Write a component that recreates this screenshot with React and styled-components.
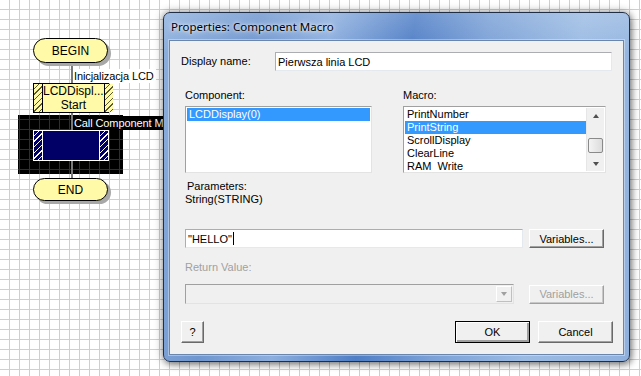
import React from 'react';
import styled, { createGlobalStyle, css } from 'styled-components';

const GlobalStyle = createGlobalStyle`
  html, body {
    margin: 0;
    padding: 0;
    overflow: hidden;
  }
  body {
    font-family: "Liberation Sans", Arial, sans-serif;
    font-size: 11px;
    color: #000;
  }
`;

const Canvas = styled.div`
  position: relative;
  width: 641px;
  height: 376px;
  overflow: hidden;
  background-color: #fff;
  background-image:
    linear-gradient(to right, #b9d3f7 1px, transparent 1px),
    linear-gradient(to bottom, #b9d3f7 1px, transparent 1px);
  background-size: 10px 10px;
  background-position: 9px 9px;
`;

/* ---------- flowchart ---------- */

const Connector = styled.div`
  position: absolute;
  left: 71px;
  top: 63px;
  width: 2px;
  height: 116px;
  background: #7a7a7a;
  z-index: 1;
`;

const Terminal = styled.div`
  position: absolute;
  left: 33px;
  top: ${p => p.$top}px;
  width: 75px;
  height: ${p => p.$h}px;
  box-sizing: border-box;
  border: 1px solid #000;
  border-radius: 13px;
  background: #fffaa8;
  box-shadow: 3px 3px 0 #a8a8a8;
  display: flex;
  align-items: center;
  justify-content: center;
  font-size: 12px;
  z-index: 2;
`;

const Selection = styled.div`
  position: absolute;
  left: 18px;
  top: 115px;
  width: 105px;
  height: 59px;
  background-color: #000;
  background-image:
    linear-gradient(to right, #3f2c0c 1px, transparent 1px),
    linear-gradient(to bottom, #3f2c0c 1px, transparent 1px);
  background-size: 10px 10px;
  background-position: 1px 4px;
`;

const NodeLabel = styled.div`
  position: absolute;
  left: 73px;
  top: ${p => p.$top}px;
  padding: 0 2px 0 1px;
  height: 14px;
  line-height: 14px;
  font-size: 11px;
  letter-spacing: -0.1px;
  white-space: nowrap;
  z-index: 3;
  ${p => p.$selected
    ? css`background: #000; color: #fff;`
    : css`background: #fff; color: #000;`}
`;

const Macro = styled.div`
  position: absolute;
  left: 33px;
  top: ${p => p.$top}px;
  width: 76px;
  height: ${p => p.$h}px;
  box-sizing: border-box;
  border: 1px solid ${p => (p.$selected ? '#fff' : '#000')};
  background: ${p => (p.$selected ? '#000066' : '#fffaa8')};
  display: flex;
  z-index: 2;
`;

const Hatch = styled.div`
  width: 8px;
  flex: none;
  ${p => p.$side === 'left'
    ? css`border-right: 1px solid ${p.$selected ? '#fff' : '#000'};`
    : css`border-left: 1px solid ${p.$selected ? '#fff' : '#000'};`}
  background: repeating-linear-gradient(
    135deg,
    ${p => (p.$selected ? '#000066' : '#fffaa8')} 0 3px,
    ${p => (p.$selected ? '#fff' : '#5a5a30')} 3px 4px
  );
`;

const MacroText = styled.div`
  flex: 1;
  display: flex;
  flex-direction: column;
  align-items: center;
  justify-content: center;
  font-size: 12px;
  line-height: 14px;
  color: ${p => (p.$selected ? '#fff' : '#000')};
`;

/* ---------- dialog window ---------- */

const Window = styled.div`
  position: absolute;
  left: 163px;
  top: 12px;
  width: 467px;
  height: 350px;
  box-sizing: border-box;
  border: 1px solid #1f2f48;
  border-radius: 7px;
  padding: 0 5px 6px 5px;
  display: flex;
  flex-direction: column;
  z-index: 10;
  background:
    linear-gradient(to bottom, rgba(255,255,255,0.18), rgba(255,255,255,0) 40px),
    linear-gradient(100deg, #8eb0dd 0%, #6f96cf 18%, #8caede 32%, #4f7ec6 48%, #7aa0d6 62%, #9bbbe3 80%, #8fb0dd 100%);
  box-shadow: 0 0 9px rgba(0, 0, 0, 0.45), 2px 3px 6px rgba(0, 0, 0, 0.3);
`;

const TitleBar = styled.div`
  height: 27px;
  display: flex;
  align-items: center;
  padding-left: 2px;
  font-family: "Noto Sans", "Open Sans", sans-serif;
  font-size: 11.5px;
  color: #000;
  text-shadow: 0 0 6px rgba(255, 255, 255, 0.9), 0 0 3px rgba(255, 255, 255, 0.9);
`;

const Client = styled.div`
  flex: 1;
  box-sizing: border-box;
  background: #f0f0f0;
  border: 1px solid #6a86ad;
  box-shadow: 0 0 0 1px rgba(255, 255, 255, 0.35);
  display: flex;
  flex-direction: column;
  padding: 11px 10px 11px 11px;
  font-size: 11px;
`;

const Row = styled.div`
  display: flex;
  align-items: center;
  gap: ${p => p.$gap || 0}px;
  margin-top: ${p => p.$mt || 0}px;
  padding-left: ${p => p.$pl || 0}px;
`;

const FieldLabel = styled.div`
  width: ${p => p.$w || 'auto'};
  flex: none;
  color: ${p => (p.$disabled ? '#a0a0a0' : '#000')};
  line-height: 13px;
  padding-left: ${p => p.$pl || 0}px;
`;

const TextBox = styled.div`
  box-sizing: border-box;
  width: ${p => p.$w}px;
  height: 19px;
  border: 1px solid;
  border-color: #abadb3 #e3e9ef #e3e9ef #abadb3;
  background: #fff;
  display: flex;
  align-items: center;
  padding-left: 2px;
  white-space: nowrap;
`;

const Caret = styled.span`
  display: inline-block;
  width: 1px;
  height: 13px;
  background: #000;
  margin-left: 1px;
`;

const ListsGrid = styled.div`
  display: grid;
  grid-template-columns: 187px 203px;
  column-gap: 31px;
  row-gap: 4px;
  margin-top: 18px;
  padding-left: 4px;
`;

const ListBox = styled.div`
  box-sizing: border-box;
  height: 67px;
  border: 1px solid;
  border-color: #a0a0a0 #e3e3e3 #e3e3e3 #a0a0a0;
  background: #fff;
  padding: 1px;
  display: flex;
  overflow: hidden;
`;

const ListItems = styled.div`
  flex: 1;
  display: flex;
  flex-direction: column;
  overflow: hidden;
`;

const ListItem = styled.div`
  height: 13px;
  flex: none;
  line-height: 13px;
  padding-left: 2px;
  white-space: nowrap;
  ${p => p.$selected && css`
    background: #3399ff;
    color: #fff;
  `}
`;

const ScrollBar = styled.div`
  width: 17px;
  flex: none;
  background: #f0f0f0;
  border-left: 1px solid #e6e6e6;
  display: flex;
  flex-direction: column;
  align-items: center;
`;

const ScrollArrow = styled.div`
  width: 15px;
  height: 15px;
  display: flex;
  align-items: center;
  justify-content: center;
  &::before {
    content: '';
    border-left: 3.5px solid transparent;
    border-right: 3.5px solid transparent;
    ${p => p.$down
      ? css`border-top: 4px solid #505050;`
      : css`border-bottom: 4px solid #505050;`}
  }
`;

const Thumb = styled.div`
  box-sizing: border-box;
  width: 15px;
  height: 15px;
  margin-top: 15px;
  margin-bottom: auto;
  border: 1px solid #8a8a8a;
  border-radius: 2px;
  background: linear-gradient(to right, #f4f4f4, #dcdcdc);
`;

const Params = styled.div`
  margin-top: 7px;
  padding-left: 4px;
  line-height: 12px;
`;

const Button = styled.div`
  box-sizing: border-box;
  width: ${p => p.$w || 75}px;
  height: ${p => p.$h || 19}px;
  flex: none;
  background: #f0f0f0;
  border: 1px solid;
  border-color: #fff #696969 #696969 #fff;
  box-shadow: inset -1px -1px 0 #a0a0a0;
  display: flex;
  align-items: center;
  justify-content: center;
  color: ${p => (p.$disabled ? '#a0a0a0' : '#000')};
  ${p => p.$disabled && css`
    border-color: #fff #a0a0a0 #a0a0a0 #fff;
    box-shadow: inset -1px -1px 0 #c8c8c8;
  `}
  ${p => p.$default && css`
    outline: 1px solid #000;
    outline-offset: -1px;
    box-shadow: inset 1px 1px 0 #fff, inset -2px -2px 0 #a0a0a0;
  `}
`;

const Combo = styled.div`
  box-sizing: border-box;
  width: 329px;
  height: 20px;
  border: 1px solid;
  border-color: #a0a0a0 #e3e3e3 #e3e3e3 #a0a0a0;
  background: #f0f0f0;
  display: flex;
  justify-content: flex-end;
  padding: 1px;
`;

const ComboButton = styled.div`
  width: 16px;
  box-sizing: border-box;
  border: 1px solid;
  border-color: #fff #c0c0c0 #c0c0c0 #fff;
  display: flex;
  align-items: center;
  justify-content: center;
  &::before {
    content: '';
    border-left: 3.5px solid transparent;
    border-right: 3.5px solid transparent;
    border-top: 4px solid #a0a0a0;
  }
`;

const Footer = styled.div`
  display: flex;
  align-items: center;
  margin-top: auto;
  gap: 8px;
`;

const Spacer = styled.div`
  flex: 1;
`;

const macros = ['PrintNumber', 'PrintString', 'ScrollDisplay', 'ClearLine', 'RAM_Write'];

export default function App() {
  return (
    <>
      <GlobalStyle />
      <Canvas>
        <Selection />
        <Connector />
        <Terminal $top={38} $h={25}>BEGIN</Terminal>
        <NodeLabel $top={69}>Inicjalizacja LCD</NodeLabel>
        <Macro $top={83} $h={30}>
          <Hatch $side="left" />
          <MacroText>
            <span>LCDDispl...</span>
            <span>Start</span>
          </MacroText>
          <Hatch $side="right" />
        </Macro>
        <NodeLabel $top={116} $selected>Call Component Macro</NodeLabel>
        <Macro $top={130} $h={31} $selected>
          <Hatch $side="left" $selected />
          <MacroText $selected />
          <Hatch $side="right" $selected />
        </Macro>
        <Terminal $top={178} $h={23}>END</Terminal>

        <Window>
          <TitleBar>Properties: Component Macro</TitleBar>
          <Client>
            <Row>
              <FieldLabel $w="94px">Display name:</FieldLabel>
              <TextBox $w={337}>Pierwsza linia LCD</TextBox>
            </Row>

            <ListsGrid>
              <FieldLabel>Component:</FieldLabel>
              <FieldLabel>Macro:</FieldLabel>
              <ListBox>
                <ListItems>
                  <ListItem $selected>LCDDisplay(0)</ListItem>
                </ListItems>
              </ListBox>
              <ListBox>
                <ListItems>
                  {macros.map(m => (
                    <ListItem key={m} $selected={m === 'PrintString'}>{m}</ListItem>
                  ))}
                </ListItems>
                <ScrollBar>
                  <ScrollArrow />
                  <Thumb />
                  <ScrollArrow $down />
                </ScrollBar>
              </ListBox>
            </ListsGrid>

            <Params>
              <FieldLabel $pl={2}>Parameters:</FieldLabel>
              <FieldLabel>String(STRING)</FieldLabel>
            </Params>

            <Row $gap={6} $mt={23} $pl={4}>
              <TextBox $w={338}>"HELLO"<Caret /></TextBox>
              <Button>Variables...</Button>
            </Row>

            <Row $mt={13} $pl={4}>
              <FieldLabel $disabled>Return Value:</FieldLabel>
            </Row>

            <Row $gap={15} $mt={10} $pl={4}>
              <Combo>
                <ComboButton />
              </Combo>
              <Button $disabled>Variables...</Button>
            </Row>

            <Footer>
              <Button $w={23} $h={22}>?</Button>
              <Spacer />
              <Button $w={75} $h={22} $default>OK</Button>
              <Button $w={75} $h={22}>Cancel</Button>
            </Footer>
          </Client>
        </Window>
      </Canvas>
    </>
  );
}
